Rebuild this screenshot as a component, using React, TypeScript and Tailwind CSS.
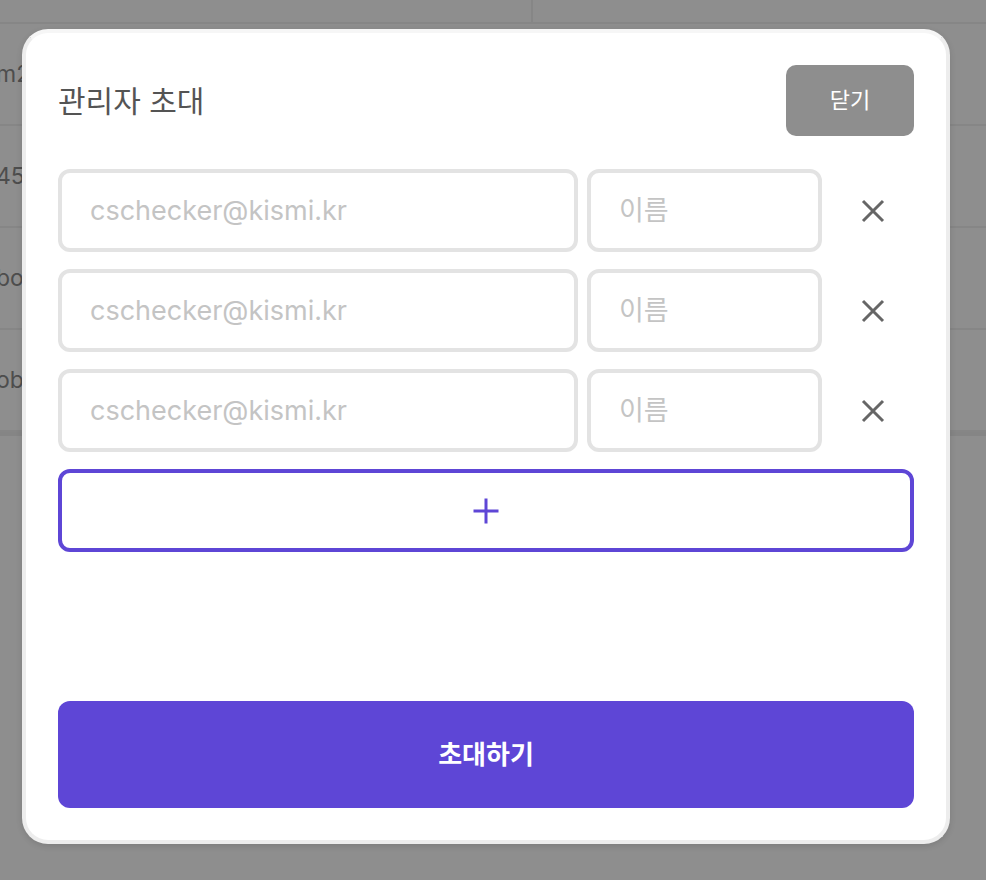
import React from "react";

const FONT = { fontFamily: 'Inter, "Noto Sans CJK KR", sans-serif' };

function XIcon() {
  return (
    <svg width="26" height="26" viewBox="0 0 26 26" fill="none">
      <path d="M3 3 L23 23 M23 3 L3 23" stroke="#666666" strokeWidth="3" />
    </svg>
  );
}

function PlusIcon() {
  return (
    <svg width="26" height="26" viewBox="0 0 26 26" fill="none">
      <path d="M13 0.5 V25.5 M0.5 13 H25.5" stroke="#5e46d6" strokeWidth="3" />
    </svg>
  );
}

function InviteRow() {
  return (
    <div className="grid grid-cols-[520px_235px_1fr] gap-[9px] h-[83px]">
      <input
        className="h-full border-[4px] border-[#e3e3e3] rounded-[12px] pl-[28px] text-[27px] text-[#333] placeholder:text-[#c4c4c4] outline-none bg-white"
        placeholder="cschecker@kismi.kr"
      />
      <input
        className="h-full border-[4px] border-[#e3e3e3] rounded-[12px] pl-[28px] text-[27px] text-[#333] placeholder:text-[#c4c4c4] outline-none bg-white"
        placeholder="이름"
      />
      <button className="flex items-center justify-center">
        <XIcon />
      </button>
    </div>
  );
}

export default function App() {
  const rows = ["m2024", "4567", "bob", "obj"];
  return (
    <div className="relative w-full h-[880px] bg-[#8e8e8e] overflow-hidden" style={FONT}>
      {/* background table (dimmed) */}
      <div className="flex flex-col">
        <div className="grid grid-cols-[533px_1fr] h-[24px] border-b-[2px] border-[#868686]">
          <div className="border-r-[2px] border-[#868686]" />
          <div />
        </div>
        {rows.map((t) => (
          <div key={t} className="h-[102px] flex items-center border-b-[2px] border-[#868686]">
            <span className="-ml-[4px] text-[23px] text-[#4d4d4d] whitespace-nowrap">{t}</span>
          </div>
        ))}
        <div className="h-[4px] bg-[#858585]" />
      </div>

      {/* modal */}
      <div className="absolute left-[22px] top-[29px] w-[928px] bg-white rounded-[26px] border-[4px] border-[#ededed] border-t-[#f6f6f6] shadow-[0_2px_6px_rgba(0,0,0,0.12)] p-[32px] flex flex-col">
        <div className="flex items-center justify-between h-[71px]">
          <h2 className="text-[30px] text-[#545454] font-normal leading-none">관리자 초대</h2>
          <button className="w-[128px] h-[71px] rounded-[10px] bg-[#8e8e8e] text-white text-[22px]">
            닫기
          </button>
        </div>
        <div className="mt-[33px] flex flex-col gap-[17px]">
          <InviteRow />
          <InviteRow />
          <InviteRow />
          <button className="h-[83px] border-[4px] border-[#5e46d6] rounded-[12px] flex items-center justify-center bg-white">
            <PlusIcon />
          </button>
        </div>
        <button className="mt-[149px] h-[107px] rounded-[12px] bg-[#5e46d6] text-white text-[26px] font-bold">
          초대하기
        </button>
      </div>
    </div>
  );
}
